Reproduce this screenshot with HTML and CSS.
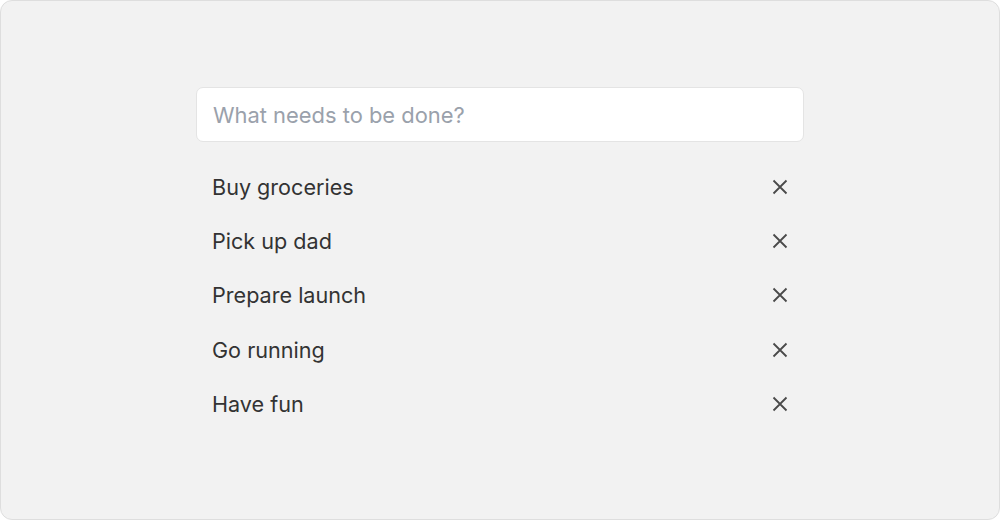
FILE: index.html
```html
<!DOCTYPE html>
<html lang="en">
<head>
<meta charset="utf-8">
<title>Todos</title>
<link rel="stylesheet" href="styles.css">
</head>
<body>
<div class="frame">
  <div class="todo">
    <input class="new-todo" type="text" placeholder="What needs to be done?">
    <ul class="list">
      <li class="item"><span class="label">Buy groceries</span><button class="remove" aria-label="Remove"><svg viewBox="0 0 16 16" width="16" height="16"><path d="M1.5 1.5 L14.5 14.5 M14.5 1.5 L1.5 14.5" /></svg></button></li>
      <li class="item"><span class="label">Pick up dad</span><button class="remove" aria-label="Remove"><svg viewBox="0 0 16 16" width="16" height="16"><path d="M1.5 1.5 L14.5 14.5 M14.5 1.5 L1.5 14.5" /></svg></button></li>
      <li class="item"><span class="label">Prepare launch</span><button class="remove" aria-label="Remove"><svg viewBox="0 0 16 16" width="16" height="16"><path d="M1.5 1.5 L14.5 14.5 M14.5 1.5 L1.5 14.5" /></svg></button></li>
      <li class="item"><span class="label">Go running</span><button class="remove" aria-label="Remove"><svg viewBox="0 0 16 16" width="16" height="16"><path d="M1.5 1.5 L14.5 14.5 M14.5 1.5 L1.5 14.5" /></svg></button></li>
      <li class="item"><span class="label">Have fun</span><button class="remove" aria-label="Remove"><svg viewBox="0 0 16 16" width="16" height="16"><path d="M1.5 1.5 L14.5 14.5 M14.5 1.5 L1.5 14.5" /></svg></button></li>
    </ul>
  </div>
</div>
</body>
</html>
```

FILE: styles.css
```css
html, body {
  margin: 0;
  padding: 0;
  background: #ffffff;
}
body {
  font-family: Inter, "Noto Sans", sans-serif;
}
.frame {
  box-sizing: border-box;
  width: 1000px;
  height: 520px;
  border: 1px solid #dedede;
  border-radius: 12px;
  background: #f2f2f2;
  display: flex;
  align-items: center;
  justify-content: center;
}
.todo {
  width: 608px;
  display: flex;
  flex-direction: column;
  margin-top: -2px;
}
.new-todo {
  box-sizing: border-box;
  width: 100%;
  height: 55px;
  margin: 0;
  padding: 2px 16px 0;
  border: 1px solid #e4e4e4;
  border-radius: 7px;
  background: #ffffff;
  font-family: Inter, "Noto Sans", sans-serif;
  font-size: 21.9px;
  color: #333333;
  outline: none;
}
.new-todo::placeholder {
  color: #9aa1ab;
}
.list {
  list-style: none;
  margin: 18px 0 0;
  padding: 0;
}
.item {
  display: flex;
  align-items: center;
  justify-content: space-between;
  height: 54.4px;
  padding: 0 16px;
  font-size: 21.6px;
  color: #333333;
}
.label {
  line-height: 30px;
}
.remove {
  display: flex;
  align-items: center;
  justify-content: center;
  width: 16px;
  height: 16px;
  padding: 0;
  border: 0;
  background: none;
  cursor: pointer;
}
.remove svg {
  display: block;
  stroke: #4a4a4a;
  stroke-width: 1.8;
  fill: none;
}
```
